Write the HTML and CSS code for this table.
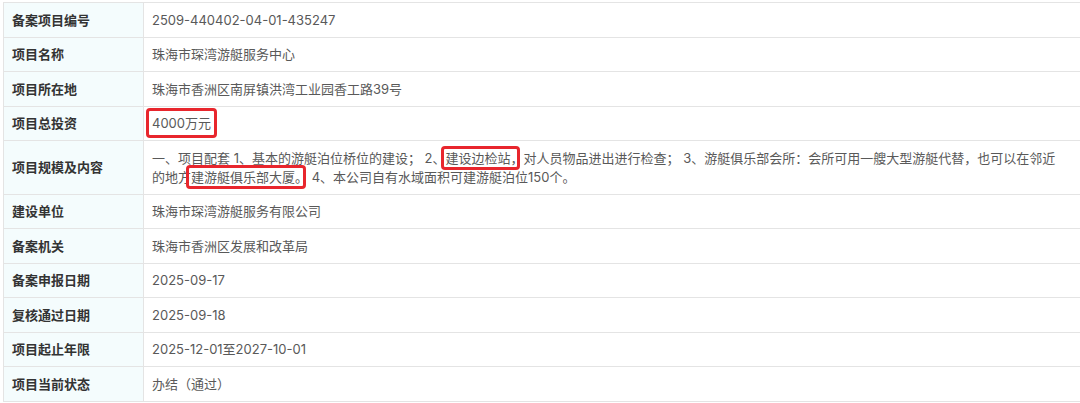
FILE: index.html
```html
<!DOCTYPE html>
<html lang="zh-CN">
<head>
  <meta charset="UTF-8">
  <title>项目备案信息</title>
  <link rel="stylesheet" href="styles.css">
</head>
<body>
  <table class="info">
    <tr><td class="label">备案项目编号</td><td class="value">2509-440402-04-01-435247</td></tr>
    <tr><td class="label">项目名称</td><td class="value">珠海市琛湾游艇服务中心</td></tr>
    <tr><td class="label">项目所在地</td><td class="value">珠海市香洲区南屏镇洪湾工业园香工路39号</td></tr>
    <tr><td class="label">项目总投资</td><td class="value"><span class="mark mark-money">4000万元</span></td></tr>
    <tr>
      <td class="label">项目规模及内容</td>
      <td class="value">一、项目配套 1、基本的游艇泊位桥位的建设； 2、<span class="mark mark-a">建设边检站，</span>对人员物品进出进行检查； 3、游艇俱乐部会所：会所可用一艘大型游艇代替，也可以在邻近的地方<span class="mark mark-b">建游艇俱乐部大厦。</span> 4、本公司自有水域面积可建游艇泊位150个。</td>
    </tr>
    <tr><td class="label">建设单位</td><td class="value">珠海市琛湾游艇服务有限公司</td></tr>
    <tr><td class="label">备案机关</td><td class="value">珠海市香洲区发展和改革局</td></tr>
    <tr><td class="label">备案申报日期</td><td class="value">2025-09-17</td></tr>
    <tr><td class="label">复核通过日期</td><td class="value">2025-09-18</td></tr>
    <tr><td class="label">项目起止年限</td><td class="value">2025-12-01至2027-10-01</td></tr>
    <tr><td class="label">项目当前状态</td><td class="value">办结（通过）</td></tr>
  </table>
</body>
</html>
```

FILE: styles.css
```css
* { box-sizing:border-box; }
html, body { margin:0; padding:0; background:#fff; overflow:hidden; }
body { padding:2px 0 0 3px; font-family:Inter, "Noto Sans CJK SC", sans-serif; font-size:13px; }

.info {
  width:1090px;
  border-collapse:collapse;
  line-height:19px;
}
.info td {
  border:1px solid #e4e4e4;
  padding:7.5px 8px 7px;
  vertical-align:middle;
}
.label {
  width:140px;
  background:#f4fcfd;
  color:#333;
  font-weight:bold;
}
.value {
  color:#595959;
  padding-right:26px !important;
}

/* red annotation boxes */
.mark { position:relative; }
.mark::after {
  content:"";
  position:absolute;
  border:3px solid #e8262d;
  border-radius:4px;
}
.mark-money::after { left:-6px; right:-6px; top:-7px; bottom:-7px; }
.mark-a::after { left:-5px; right:4px; top:-4px; bottom:-4px; }
.mark-b::after { left:-5px; right:2px; top:-4px; bottom:-4px; }
```
